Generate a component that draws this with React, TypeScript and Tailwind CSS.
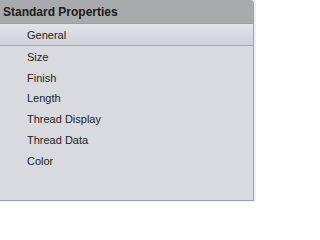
const items = ['General', 'Size', 'Finish', 'Length', 'Thread Display', 'Thread Data', 'Color']

export default function App() {
  return (
    <div className="w-[256px] h-[202px] bg-[#eef0f4] font-['Liberation_Sans',Arial,sans-serif]">
      <div className="w-[254px] h-[201px] flex flex-col bg-[#d8dadf] border-r border-b border-[#9da1b2] rounded-tr-[4px] overflow-hidden">
        <div className="h-[24px] shrink-0 bg-[#a9aaad] border-b border-[#9a9dac] flex items-center pl-[3px] pt-[1px] text-[12px] font-bold text-[#1a1a1a]">
          Standard Properties
        </div>
        <div className="flex flex-col">
          {items.map((item, i) => (
            <div
              key={item}
              className={
                i === 0
                  ? 'h-[22px] flex items-center pl-[27px] pt-[2px] text-[11px] text-[#1e1e1e] bg-gradient-to-b from-[#e2e4e9] to-[#cfd1d9] border-b border-[#a3a6b5]'
                  : 'h-[20.7px] flex items-center pl-[27px] pt-[2px] text-[11px] text-[#1e1e1e]'
              }
            >
              {item}
            </div>
          ))}
        </div>
      </div>
    </div>
  )
}
